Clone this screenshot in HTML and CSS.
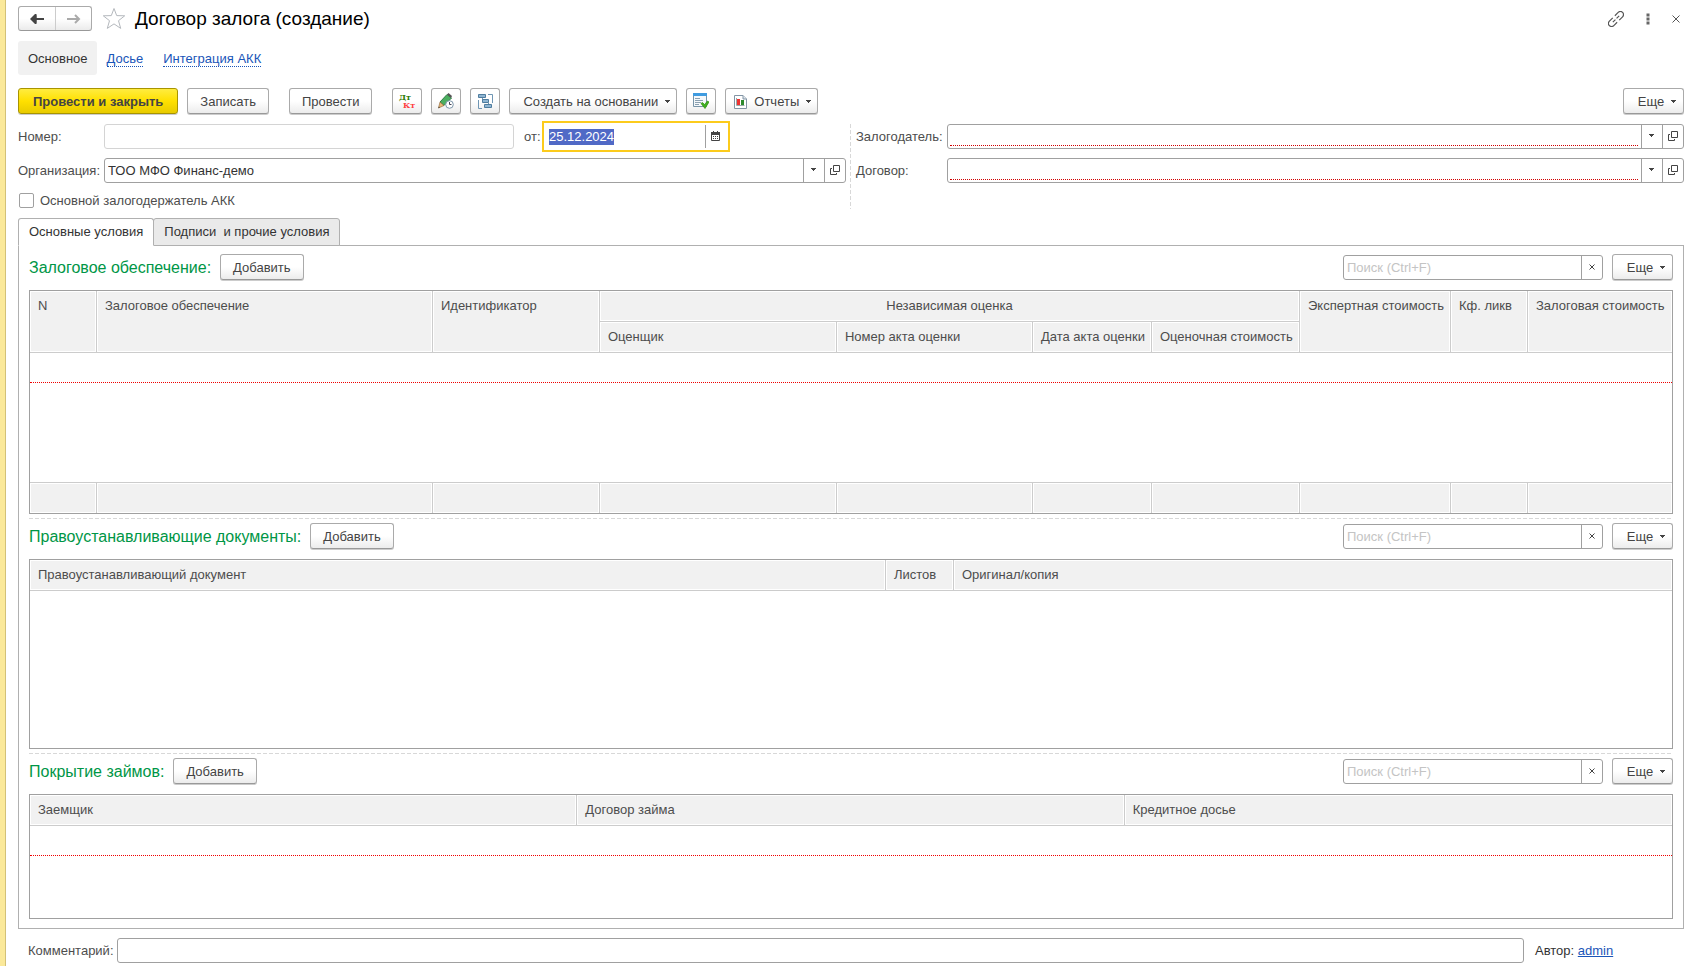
FILE: index.html
```
<!DOCTYPE html>
<html lang="ru">
<head>
    <meta charset="UTF-8">
    <meta name="viewport" content="width=device-width, initial-scale=1.0">
    <title>Договор залога (создание)</title>
    <link rel="stylesheet" href="styles.css">
</head>
<body>
    <!-- Общие значки -->
    <svg class="sprite" aria-hidden="true">
        <symbol id="i-down" viewBox="0 0 5 3"><path d="M0 0h5v1H0zM1 1h3v1H1zM2 2h1v1H2z" fill="#444"/></symbol>
        <symbol id="i-open" viewBox="0 0 10 10"><path d="M3.5 .5h6v6h-6zM2 3.5H.5v6h6V8" fill="none" stroke="#444"/></symbol>
        <symbol id="i-clear" viewBox="0 0 6 6"><path d="M.5 .5l5 5M5.500 .5l-5 5" fill="none" stroke="#444"/></symbol>
    </svg>

    <main class="window">
        <header class="title-bar">
            <div class="history">
                <button type="button" class="history-btn" aria-label="Назад">
                    <svg width="14" height="10" viewBox="0 0 14 10"><path d="M2 5h12" fill="none" stroke="#444" stroke-width="2"/><path d="M0 5l5-5h1.500v10H5z" fill="#444"/><path d="M5 4V2.500L6.500 1v3zM5 6v1.500L6.500 9V6z" fill="#444"/></svg>
                </button>
                <button type="button" class="history-btn" aria-label="Вперед" disabled>
                    <svg width="14" height="10" viewBox="0 0 14 10"><path d="M0 5h12.500M8 1l4 4-4 4" fill="none" stroke="#aaa" stroke-width="2"/></svg>
                </button>
            </div>
            <button type="button" class="icon-btn star" aria-label="В избранное">
                <svg width="24" height="23" viewBox="0 0 24 23"><path d="M12 1.500l2.700 7.100 8 .2-6.200 4.900 2.200 7.700-6.700-4.500-6.700 4.500 2.200-7.700L1.300 8.800l8-.2z" fill="#fff" stroke="#b4b8bd"/></svg>
            </button>
            <h1>Договор залога (создание)</h1>
            <div class="window-tools">
                <button type="button" class="icon-btn" aria-label="Получить ссылку">
                    <svg width="16" height="16" viewBox="0 0 16 16"><g transform="rotate(-45 8 8)" fill="none" stroke="#555" stroke-width="1.200"><path d="M6.500 4.900H1.800a3.100 3.100 0 0 0 0 6.200h4.700M9.500 4.900h4.700a3.100 3.100 0 0 1 0 6.200H9.500M3.500 8h3.700M8.800 8h3.700"/></g></svg>
                </button>
                <button type="button" class="icon-btn" aria-label="Меню окна">
                    <svg width="4" height="12" viewBox="0 0 4 12"><path d="M.5 .5h3v3h-3zM.5 4.500h3v3h-3zM.5 8.500h3v3h-3z" fill="#666"/></svg>
                </button>
                <button type="button" class="icon-btn" aria-label="Закрыть">
                    <svg width="8" height="8" viewBox="0 0 8 8"><path d="M.5 .5l7 7M7.500 .5l-7 7" fill="none" stroke="#555"/></svg>
                </button>
            </div>
        </header>

        <nav class="sections">
            <span class="section-current">Основное</span>
            <a href="#dossier">Досье</a>
            <a href="#akk">Интеграция АКК</a>
        </nav>

        <div class="toolbar">
            <div class="group">
                <button type="button" class="btn btn-main">Провести и закрыть</button>
                <button type="button" class="btn">Записать</button>
            </div>
            <button type="button" class="btn">Провести</button>
            <div class="group">
                <button type="button" class="btn btn-icon" aria-label="Движения документа">
                    <svg width="16" height="16" viewBox="0 0 16 16" class="dtkt"><text x="0" y="7" fill="#2a7a00">Дт</text><text x="4" y="15" fill="#ff4040">Кт</text></svg>
                </button>
                <button type="button" class="btn btn-icon" aria-label="История изменений">
                    <svg width="16" height="16" viewBox="0 0 16 16">
                        <path d="M2 9l7-7.500 4.500 3.500-7.500 7.500z" fill="#4caf60" stroke="#2f7f45"/>
                        <path d="M9 1.500L10.500 0 14 3l-1 2z" fill="#555"/>
                        <path d="M2 9l4 3.500-5.500 2.500z" fill="#e8b878" stroke="#8a6030" stroke-width=".6"/>
                        <path d="M.3 15.300l1.500-.7-.9-1z" fill="#333"/>
                        <circle cx="11.500" cy="11.500" r="3.800" fill="#fff" stroke="#7d96aa"/>
                        <path d="M11.500 9v2.500h2" fill="none" stroke="#445"/>
                    </svg>
                </button>
                <button type="button" class="btn btn-icon" aria-label="Структура подчиненности">
                    <svg width="15" height="15" viewBox="0 0 15 15">
                        <path d="M4.500 4v3.500M10.500 9v2M10 .5h4.500V9M4 14.500H.5V6" fill="none" stroke="#6f96b4"/>
                        <path d="M.5 .5h7v3h-7zM4.500 5.500h6v3h-6zM6.500 10.500h7v3h-7z" fill="#8fb5d2" stroke="#4f7d9f"/>
                    </svg>
                </button>
                <button type="button" class="btn btn-menu">Создать на основании <svg width="5" height="3"><use href="#i-down"/></svg></button>
                <button type="button" class="btn btn-icon" aria-label="Задачи">
                    <svg width="16" height="16" viewBox="0 0 16 16">
                        <path d="M.5 .5h13v13H.5z" fill="#f4f8fb" stroke="#7794a8"/>
                        <path d="M0 0h14v3H0z" fill="#3e9be0"/>
                        <path d="M2 5.500h5M2 7.500h8M2 9.500h6M2 11.500h4" stroke="#8ba0b0"/>
                        <path d="M8 10.500l1.500-1 2 2L14.500 8l1.500 1-4 6.500z" fill="#3fb020" stroke="#2c8f10" stroke-width=".7"/>
                    </svg>
                </button>
                <button type="button" class="btn btn-menu btn-reports">
                    <svg width="13" height="14" viewBox="0 0 13 14">
                        <path d="M.5 .5h8.500l3.500 3.500v9.500H.5z" fill="#fff" stroke="#8295a5"/>
                        <path d="M9 .5V4h3.500" fill="#dfe6ec" stroke="#8295a5"/>
                        <path d="M2.500 3v7.500h8" fill="none" stroke="#9aa"/>
                        <path d="M3 4h3v6H3z" fill="#e33"/><path d="M7 5h3v5H7z" fill="#2d8a2d"/>
                    </svg>
                    Отчеты <svg width="5" height="3"><use href="#i-down"/></svg></button>
            </div>
            <button type="button" class="btn btn-menu btn-more">Еще <svg width="5" height="3"><use href="#i-down"/></svg></button>
        </div>

        <form class="details">
            <div class="column">
                <div class="row row-number">
                    <label for="number" class="label-left">Номер:</label>
                    <input type="text" id="number" class="input input-readonly" readonly>
                    <label for="date" class="label-date">от:</label>
                    <div class="date-field">
                        <input type="text" id="date" value="25.12.2024">
                        <button type="button" aria-label="Выбрать дату">
                            <svg width="9" height="10" viewBox="0 0 9 10"><path d="M.5 1.500h8v8h-8z" fill="none" stroke="#444"/><path d="M0 1h9v3H0zM2 0h1v1H2zM6 0h1v1H6zM2 5h1v1H2zM4 5h1v1H4zM6 5h1v1H6zM2 7h1v1H2zM4 7h1v1H4zM6 7h1v1H6z" fill="#444"/></svg>
                        </button>
                    </div>
                </div>
                <div class="row">
                    <label for="org" class="label-left">Организация:</label>
                    <div class="field">
                        <input type="text" id="org" value="ТОО МФО Финанс-демо">
                        <button type="button" class="drop" aria-label="Выбрать"><svg width="5" height="3"><use href="#i-down"/></svg></button>
                        <button type="button" aria-label="Открыть"><svg width="10" height="10"><use href="#i-open"/></svg></button>
                    </div>
                </div>
                <label class="check"><input type="checkbox"> Основной залогодержатель АКК</label>
            </div>
            <div class="divider"></div>
            <div class="column">
                <div class="row">
                    <label for="pledger" class="label-right">Залогодатель:</label>
                    <div class="field required">
                        <input type="text" id="pledger">
                        <button type="button" class="drop" aria-label="Выбрать"><svg width="5" height="3"><use href="#i-down"/></svg></button>
                        <button type="button" aria-label="Открыть"><svg width="10" height="10"><use href="#i-open"/></svg></button>
                    </div>
                </div>
                <div class="row">
                    <label for="contract" class="label-right">Договор:</label>
                    <div class="field required">
                        <input type="text" id="contract">
                        <button type="button" class="drop" aria-label="Выбрать"><svg width="5" height="3"><use href="#i-down"/></svg></button>
                        <button type="button" aria-label="Открыть"><svg width="10" height="10"><use href="#i-open"/></svg></button>
                    </div>
                </div>
            </div>
        </form>

        <div class="tabs" role="tablist">
            <button type="button" class="tab tab-active" role="tab" aria-selected="true">Основные условия</button>
            <button type="button" class="tab" role="tab" aria-selected="false">Подписи&nbsp; и прочие условия</button>
        </div>

        <div class="panel">
            <section class="block">
                <div class="block-head">
                    <h2>Залоговое обеспечение:</h2>
                    <button type="button" class="btn">Добавить</button>
                    <div class="field search">
                        <input type="text" placeholder="Поиск (Ctrl+F)" aria-label="Поиск">
                        <button type="button" aria-label="Очистить"><svg width="6" height="6"><use href="#i-clear"/></svg></button>
                    </div>
                    <button type="button" class="btn btn-menu">Еще <svg width="5" height="3"><use href="#i-down"/></svg></button>
                </div>
                <table class="grid">
                    <colgroup>
                        <col class="c-num"><col><col class="c-ident"><col class="c-appraiser"><col class="c-act"><col class="c-date"><col class="c-cost"><col class="c-expert"><col class="c-ratio"><col class="c-pledge">
                    </colgroup>
                    <thead>
                        <tr>
                            <th rowspan="2">N</th>
                            <th rowspan="2">Залоговое обеспечение</th>
                            <th rowspan="2">Идентификатор</th>
                            <th colspan="4" class="center">Независимая оценка</th>
                            <th rowspan="2">Экспертная стоимость</th>
                            <th rowspan="2">Кф. ликв</th>
                            <th rowspan="2">Залоговая стоимость</th>
                        </tr>
                        <tr>
                            <th>Оценщик</th>
                            <th>Номер акта оценки</th>
                            <th>Дата акта оценки</th>
                            <th>Оценочная стоимость</th>
                        </tr>
                    </thead>
                    <tbody>
                        <tr class="row-required"><td colspan="10"></td></tr>
                        <tr class="space-m"><td colspan="10"></td></tr>
                    </tbody>
                    <tfoot>
                        <tr><td></td><td></td><td></td><td></td><td></td><td></td><td></td><td></td><td></td><td></td></tr>
                    </tfoot>
                </table>
            </section>

            <section class="block">
                <div class="block-head">
                    <h2>Правоустанавливающие документы:</h2>
                    <button type="button" class="btn">Добавить</button>
                    <div class="field search">
                        <input type="text" placeholder="Поиск (Ctrl+F)" aria-label="Поиск">
                        <button type="button" aria-label="Очистить"><svg width="6" height="6"><use href="#i-clear"/></svg></button>
                    </div>
                    <button type="button" class="btn btn-menu">Еще <svg width="5" height="3"><use href="#i-down"/></svg></button>
                </div>
                <table class="grid">
                    <colgroup><col><col class="c-sheets"><col class="c-copy"></colgroup>
                    <thead>
                        <tr><th>Правоустанавливающий документ</th><th>Листов</th><th>Оригинал/копия</th></tr>
                    </thead>
                    <tbody>
                        <tr class="space-l"><td colspan="3"></td></tr>
                    </tbody>
                </table>
            </section>

            <section class="block">
                <div class="block-head">
                    <h2>Покрытие займов:</h2>
                    <button type="button" class="btn">Добавить</button>
                    <div class="field search">
                        <input type="text" placeholder="Поиск (Ctrl+F)" aria-label="Поиск">
                        <button type="button" aria-label="Очистить"><svg width="6" height="6"><use href="#i-clear"/></svg></button>
                    </div>
                    <button type="button" class="btn btn-menu">Еще <svg width="5" height="3"><use href="#i-down"/></svg></button>
                </div>
                <table class="grid">
                    <thead>
                        <tr><th>Заемщик</th><th>Договор займа</th><th>Кредитное досье</th></tr>
                    </thead>
                    <tbody>
                        <tr class="row-required"><td colspan="3"></td></tr>
                        <tr class="space-s"><td colspan="3"></td></tr>
                    </tbody>
                </table>
            </section>
        </div>

        <footer class="bottom">
            <label for="comment">Комментарий:</label>
            <input type="text" id="comment" class="input">
            <div class="author">Автор: <a href="#admin">admin</a></div>
        </footer>
    </main>

    <script>
        // Дата выделена сразу после открытия формы
        var dateInput = document.getElementById('date');
        dateInput.focus();
        dateInput.select();
    </script>
</body>
</html>
```
FILE: styles.css
```
* {
    box-sizing: border-box;
}
body {
    margin: 0;
    background-color: #fff;
    color: #4d4d4d;
    font: 13px/16px "Liberation Sans", Arial, sans-serif;
}
button,
input {
    font: inherit;
    color: inherit;
    margin: 0;
}
svg {
    display: block;
    flex: none;
}
.sprite {
    position: absolute;
    width: 0;
    height: 0;
}
.window {
    min-height: 100vh;
    padding: 6px 13px 2px;
    border-left: 5px solid #fbe99a;
    box-shadow: inset 1px 0 0 #d3c177;
}

/* Заголовок */
.title-bar {
    display: flex;
    align-items: center;
    height: 25px;
    margin-bottom: 10px;
}
.history {
    display: flex;
    height: 25px;
    border: 1px solid #aaa;
    border-bottom-color: #999;
    border-radius: 3px;
    background: linear-gradient(#fff 50%, #ebebeb);
}
.history-btn {
    display: flex;
    align-items: center;
    justify-content: center;
    width: 36px;
    padding: 0;
    border: none;
    background: none;
}
.history-btn + .history-btn {
    border-left: 1px solid #ccc;
}
.icon-btn {
    display: flex;
    align-items: center;
    justify-content: center;
    padding: 0;
    border: none;
    background: none;
    cursor: pointer;
}
.star {
    margin: 0 9px 0 10px;
}
h1 {
    margin: 0;
    color: #000;
    font-size: 19px;
    font-weight: normal;
    line-height: 25px;
}
.window-tools {
    display: flex;
    align-items: center;
    gap: 22px;
    margin-left: auto;
    padding-right: 4px;
}

/* Разделы */
.sections {
    display: flex;
    align-items: center;
    gap: 20px;
    height: 34px;
    margin-bottom: 13px;
}
.section-current {
    margin-right: -10px;
    padding: 10px 9px 8px 10px;
    border-radius: 3px;
    background-color: #f1f1f1;
    color: #333;
}
a {
    color: #1a55b8;
}
.sections a {
    padding-top: 2px;
    line-height: 14px;
    border-bottom: 1px dotted #1a55b8;
    text-decoration: none;
}

/* Кнопки */
.toolbar {
    display: flex;
    gap: 20px;
    margin-bottom: 10px;
}
.group {
    display: flex;
    gap: 9px;
}
.btn {
    display: flex;
    align-items: center;
    justify-content: center;
    height: 26px;
    padding: 1px 12px 0;
    border: 1px solid #aaa;
    border-bottom-color: #999;
    border-radius: 3px;
    background: linear-gradient(#fff 50%, #ececec);
    box-shadow: 0 1px 0 #ccc;
    color: #444;
    white-space: nowrap;
    cursor: pointer;
}
.btn-main {
    padding: 1px 14px 0;
    border-color: #a89400;
    background: linear-gradient(#ffec40, #ffe000 50%, #e8cb00);
    font-weight: bold;
}
.btn-icon {
    width: 30px;
    padding: 0;
}
.btn-menu {
    gap: 7px;
    min-width: 61px;
    padding: 1px 6px 0 13px;
}
.btn-reports {
    padding-left: 8px;
}
.btn-more {
    margin-left: auto;
}
.dtkt {
    overflow: visible;
    font: bold 8px "DejaVu Serif", "Times New Roman", serif;
}

/* Реквизиты */
.details {
    display: flex;
    margin-bottom: 9px;
}
.column {
    display: flex;
    flex: 1;
    flex-direction: column;
    gap: 9px;
}
.divider {
    width: 1px;
    margin: 0 5px 0 4px;
    background: repeating-linear-gradient(#d8d8d8 0 4px, transparent 4px 6px);
}
.row {
    display: flex;
    align-items: center;
    height: 25px;
}
.label-left {
    width: 86px;
}
.label-right {
    width: 91px;
}
.label-date {
    width: 31px;
    padding-left: 10px;
}
.row-number {
    padding-right: 119px;
}
.input {
    flex: 1;
    min-width: 0;
    height: 25px;
    padding: 0 3px;
    border: 1px solid #a0a0a0;
    border-radius: 3px;
    color: #333;
}
.input-readonly {
    border-color: #d4d4d4;
}
.field {
    display: flex;
    flex: 1;
    height: 25px;
    border: 1px solid #a0a0a0;
    border-radius: 3px;
}
.field input,
.date-field input {
    flex: 1;
    min-width: 0;
    padding: 0 3px;
    border: none;
    outline: none;
    background: none;
    color: #333;
}
.field button,
.date-field button {
    display: flex;
    align-items: center;
    justify-content: center;
    width: 21px;
    padding: 0 0 2px;
    border: none;
    border-left: 1px solid #a0a0a0;
    background: none;
    cursor: pointer;
}
.field .drop {
    padding-right: 2px;
}
.required input {
    margin: 0 3px 2px 2px;
    border-bottom: 1px dotted #d00000;
}
.date-field {
    display: flex;
    width: 182px;
    height: 25px;
    outline: 2px solid #fccb1c;
    outline-offset: 1px;
}
.date-field input {
    padding-left: 4px;
}
.date-field button {
    width: 22px;
    margin: 1px 0;
    padding-right: 2px;
}
.date-field input::selection {
    background-color: #5069c6;
    color: #fff;
}
.check {
    display: flex;
    align-items: center;
    gap: 6px;
    height: 17px;
}
.check input {
    appearance: none;
    width: 15px;
    height: 15px;
    margin-left: 1px;
    border: 1px solid #a0a0a0;
    border-radius: 2px;
    background-color: #fff;
}

/* Закладки */
.tabs {
    display: flex;
}
.tab {
    height: 28px;
    padding: 0 10px;
    border: 1px solid #b0b0b0;
    border-radius: 3px 3px 0 0;
    background-color: #eaeaea;
    color: #333;
    white-space: pre;
}
.tab + .tab {
    margin-left: -1px;
}
.tab-active {
    position: relative;
    border-bottom-color: #fff;
    background-color: #fff;
}
.panel {
    margin-top: -1px;
    padding: 8px 10px 9px;
    border: 1px solid #b0b0b0;
}
.block + .block {
    margin-top: 4px;
    padding-top: 5px;
    background: repeating-linear-gradient(90deg, #d8d8d8 0 4px, transparent 4px 6px) top / 100% 1px no-repeat;
}
.block-head {
    display: flex;
    align-items: flex-end;
    gap: 9px;
    margin-bottom: 10px;
}
h2 {
    margin: 0;
    color: #009646;
    font-size: 16px;
    font-weight: normal;
    line-height: 25px;
}
.search {
    flex: none;
    width: 260px;
    margin-left: auto;
}
.search input::placeholder {
    color: #c4c4c4;
}

/* Таблицы */
.grid {
    width: 100%;
    border: 1px solid #a0a0a0;
    border-spacing: 0;
    table-layout: fixed;
}
.grid th,
.grid tfoot td {
    height: 31px;
    padding: 7px 0 7px 8px;
    border-right: 1px solid #ccc;
    border-bottom: 1px solid #ccc;
    background-color: #f1f1f1;
    box-shadow: inset 0 0 0 1px #fff;
    font-weight: normal;
    text-align: left;
    vertical-align: top;
    white-space: nowrap;
}
.grid th.center {
    padding-left: 0;
    text-align: center;
}
.grid tfoot td {
    border-top: 1px solid #ccc;
    border-bottom: none;
}
.grid tr:first-child th:last-child,
.grid tfoot td:last-child {
    border-right: none;
}
.grid tbody td {
    padding: 0;
}
.row-required td {
    height: 30px;
    border-bottom: 1px dotted #f00000;
}
.space-s {
    height: 62px;
}
.space-m {
    height: 99px;
}
.space-l {
    height: 157px;
}
.c-num { width: 67px; }
.c-ident { width: 167px; }
.c-appraiser { width: 237px; }
.c-act { width: 196px; }
.c-date { width: 119px; }
.c-cost { width: 148px; }
.c-expert { width: 151px; }
.c-ratio { width: 77px; }
.c-pledge { width: 144px; }
.c-sheets { width: 68px; }
.c-copy { width: 718px; }

/* Подвал */
.bottom {
    display: flex;
    align-items: center;
    margin-top: 9px;
    padding-left: 10px;
}
.bottom label {
    width: 89px;
}
.author {
    width: 160px;
    padding-left: 11px;
    color: #333;
}
```
